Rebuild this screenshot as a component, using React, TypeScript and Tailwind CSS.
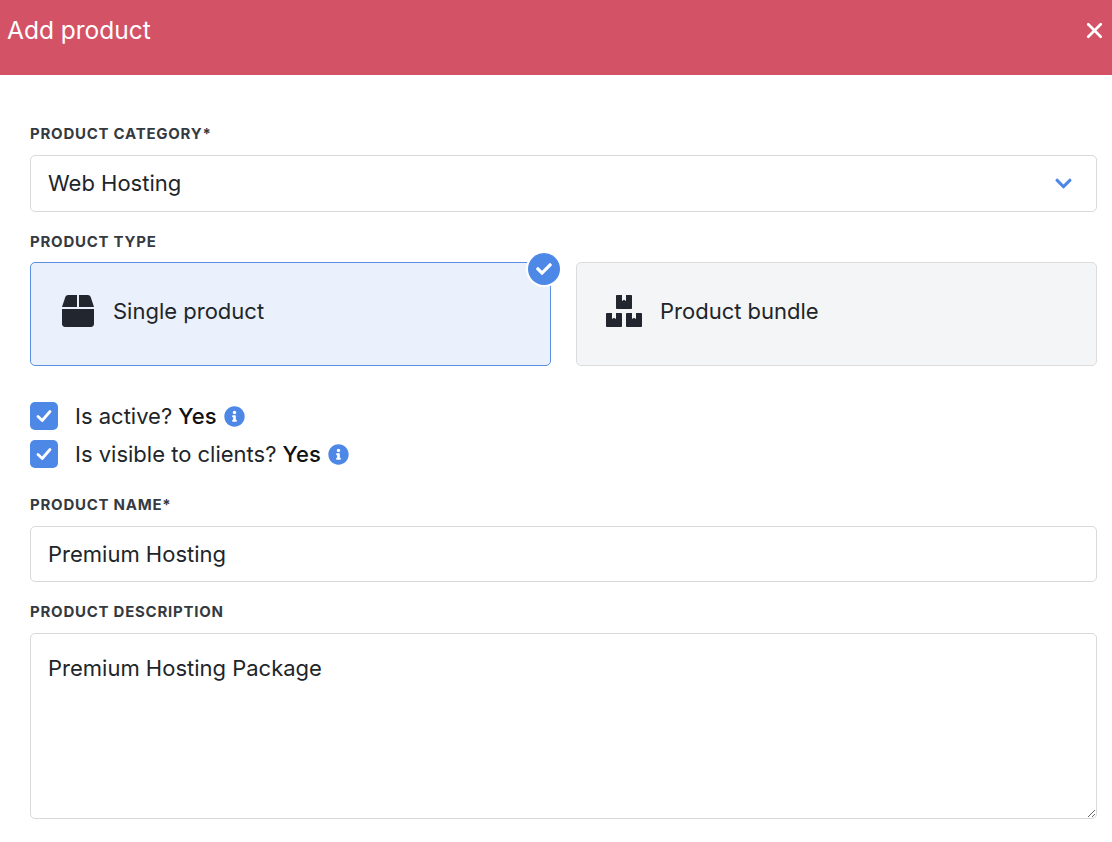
import { FaBox, FaBoxes, FaInfoCircle, FaChevronDown, FaCheck } from "react-icons/fa";
import { X } from "lucide-react";

function Label({ children }: { children: React.ReactNode }) {
  return (
    <div className="text-[15px] leading-[18px] font-bold uppercase tracking-[0.05em] text-[#343a40]">
      {children}
    </div>
  );
}

function CheckRow({ text }: { text: string }) {
  return (
    <div className="flex items-center h-[28px]">
      <div className="w-[28px] h-[28px] rounded-[5px] bg-[#4d88e6] flex items-center justify-center">
        <svg width="20" height="20" viewBox="0 0 20 20" fill="none">
          <path d="M4 10.5 L8.2 14.5 L16 5.5" stroke="white" strokeWidth="2.8" strokeLinecap="round" strokeLinejoin="round" />
        </svg>
      </div>
      <span className="ml-[17px] text-[22px] leading-[28px] text-[#212529]">
        {text} <span className="font-medium text-[#111]">Yes</span>
      </span>
      <FaInfoCircle className="ml-[7px] text-[#4d88e6]" size={21} />
    </div>
  );
}

export default function App() {
  return (
    <div className="min-h-screen bg-white font-['Inter',sans-serif]">
      {/* header */}
      <div className="h-[75px] bg-[#d45266] flex items-start justify-between pt-[12px] pl-[7px] pr-[5px]">
        <h1 className="text-[24.5px] leading-[36px] text-white">Add product</h1>
        <X className="text-white mt-[6px]" size={25} strokeWidth={2.6} />
      </div>

      <div className="pl-[30px] pr-[15px] pt-[50px]">
        <Label>Product category*</Label>
        <div className="mt-[12px] h-[57px] border border-[#d9d9d9] rounded-[5px] flex items-center justify-between pl-[17px] pr-[23px]">
          <span className="text-[22px] text-[#212529]">Web Hosting</span>
          <FaChevronDown className="text-[#4d88e6]" size={19} />
        </div>

        <div className="mt-[21px]">
          <Label>Product type</Label>
        </div>
        <div className="mt-[11px] grid grid-cols-2 gap-[25px]">
          <div className="relative h-[104px] rounded-[5px] border border-[#5b8fe3] bg-[#eaf1fc] flex items-center pl-[31px] pb-[6px]">
            <FaBox className="text-[#22262f]" size={32} />
            <span className="ml-[19px] text-[22px] text-[#212529]">Single product</span>
            <div className="absolute -top-[12px] -right-[12px] w-[36px] h-[36px] rounded-full bg-white flex items-center justify-center">
              <div className="w-[32px] h-[32px] rounded-full bg-[#4d88e6] flex items-center justify-center">
                <FaCheck className="text-white" size={16} />
              </div>
            </div>
          </div>
          <div className="h-[104px] rounded-[5px] border border-[#dcdcdc] bg-[#f4f5f7] flex items-center pl-[29px] pb-[6px]">
            <FaBoxes className="text-[#22262f]" size={36} />
            <span className="ml-[18px] text-[22px] text-[#212529]">Product bundle</span>
          </div>
        </div>

        <div className="mt-[36px] flex flex-col gap-[10px]">
          <CheckRow text="Is active?" />
          <CheckRow text="Is visible to clients?" />
        </div>

        <div className="mt-[28px]">
          <Label>Product name*</Label>
        </div>
        <div className="mt-[12px] h-[56px] border border-[#d9d9d9] rounded-[5px] flex items-center pl-[17px]">
          <span className="text-[22px] text-[#212529]">Premium Hosting</span>
        </div>

        <div className="mt-[21px]">
          <Label>Product description</Label>
        </div>
        <textarea
          className="mt-[12px] block w-full h-[186px] border border-[#d9d9d9] rounded-[5px] px-[17px] pt-[18px] text-[22px] text-[#212529] resize-y outline-none"
          defaultValue="Premium Hosting Package"
        />
      </div>
    </div>
  );
}
